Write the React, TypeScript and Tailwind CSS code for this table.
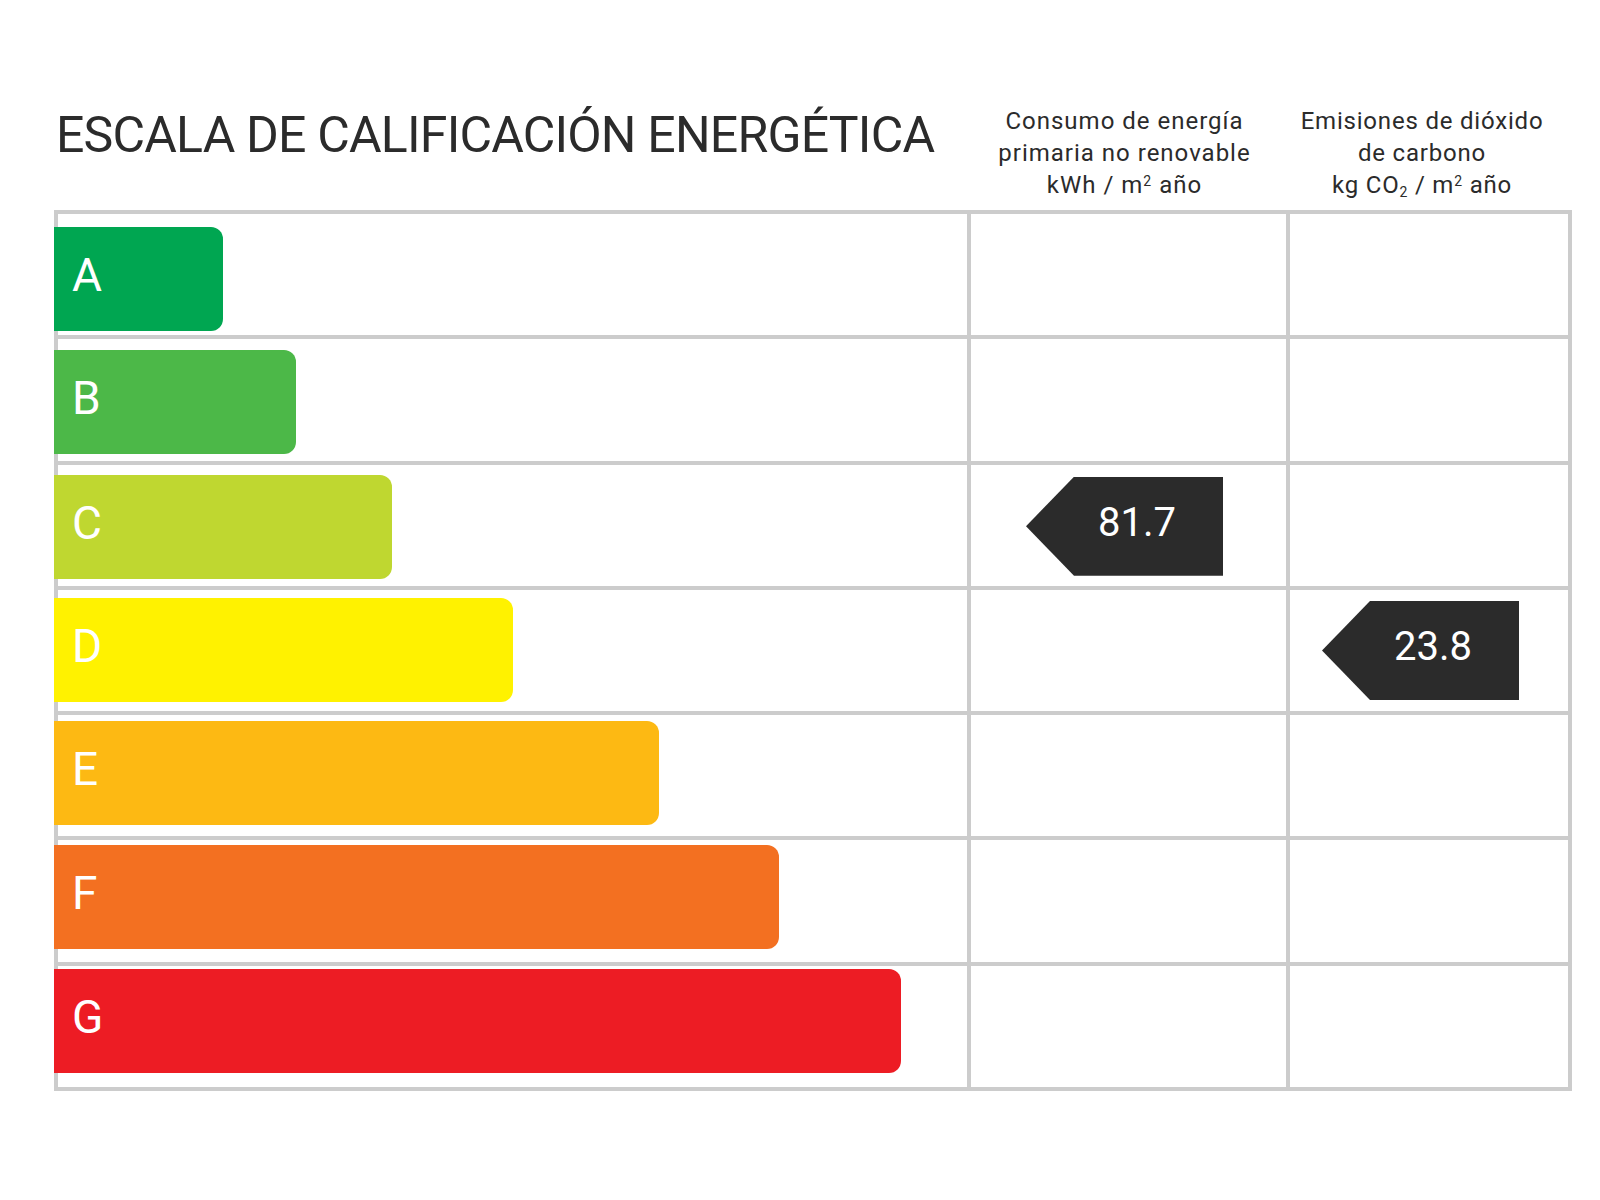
import React from "react";

const bars = [
  { l: "A", w: "w-[169px]", mt: "mt-[13px]", c: "bg-[#00a651]" },
  { l: "B", w: "w-[242px]", mt: "mt-[11px]", c: "bg-[#4cb848]" },
  { l: "C", w: "w-[338px]", mt: "mt-[10px]", c: "bg-[#bfd730]" },
  { l: "D", w: "w-[459px]", mt: "mt-[8px]", c: "bg-[#fff200]" },
  { l: "E", w: "w-[605px]", mt: "mt-[6px]", c: "bg-[#fdb913]" },
  { l: "F", w: "w-[725px]", mt: "mt-[5px]", c: "bg-[#f37021]" },
  { l: "G", w: "w-[847px]", mt: "mt-[3px]", c: "bg-[#ed1c24]" },
];

function Tag({ value }: { value: string }) {
  return (
    <div className="w-[197px] h-[99px] bg-[#2b2b2b] [clip-path:polygon(48px_0,100%_0,100%_100%,48px_100%,0_50%)] flex items-center pl-[72px] text-white text-[40px] leading-none pb-[6px]">
      {value}
    </div>
  );
}

export default function App() {
  return (
    <div
      className="w-[1600px] h-[1200px] bg-white pl-[54px] pt-[110px] text-[#2b2b2b]"
      style={{ fontFamily: "Roboto, 'Noto Sans', sans-serif" }}
    >
      <div className="flex h-[100px]">
        <div className="w-[913px] pl-[2px]">
          <h1 className="text-[50px] leading-[50px] font-normal whitespace-nowrap tracking-[-0.8px]">
            ESCALA DE CALIFICACIÓN ENERGÉTICA
          </h1>
        </div>
        <div className="w-[323px] flex items-end justify-center pb-[9px] pr-[8px]">
          <p className="text-[24px] leading-[32px] text-center whitespace-nowrap tracking-[1px]">
            Consumo de energía
            <br />
            primaria no renovable
            <br />
            kWh / m<sup className="text-[14px]">2</sup> año
          </p>
        </div>
        <div className="w-[282px] flex items-end justify-center pb-[9px] pr-[18px]">
          <p className="text-[24px] leading-[32px] text-center whitespace-nowrap tracking-[0.8px]">
            Emisiones de dióxido
            <br />
            de carbono
            <br />
            kg CO<sub className="text-[14px]">2</sub> / m<sup className="text-[14px]">2</sup> año
          </p>
        </div>
      </div>
      <div className="w-[1518px] h-[881px] border-4 border-[#cccccc] flex flex-col divide-y-4 divide-[#cccccc]">
        {bars.map((b) => (
          <div key={b.l} className="flex-1 flex divide-x-4 divide-[#cccccc]">
            <div className="w-[913px] flex flex-col">
              <div
                className={`${b.w} ${b.mt} ${b.c} h-[104px] -ml-[4px] rounded-r-[12px] flex items-center pl-[18px] pb-[8px] text-white text-[46px] leading-none`}
              >
                {b.l}
              </div>
            </div>
            <div className="w-[319px] flex items-center pl-[55px] pt-[2px]">
              {b.l === "C" && <Tag value="81.7" />}
            </div>
            <div className="flex-1 flex items-center pl-[32px]">
              {b.l === "D" && <Tag value="23.8" />}
            </div>
          </div>
        ))}
      </div>
    </div>
  );
}
